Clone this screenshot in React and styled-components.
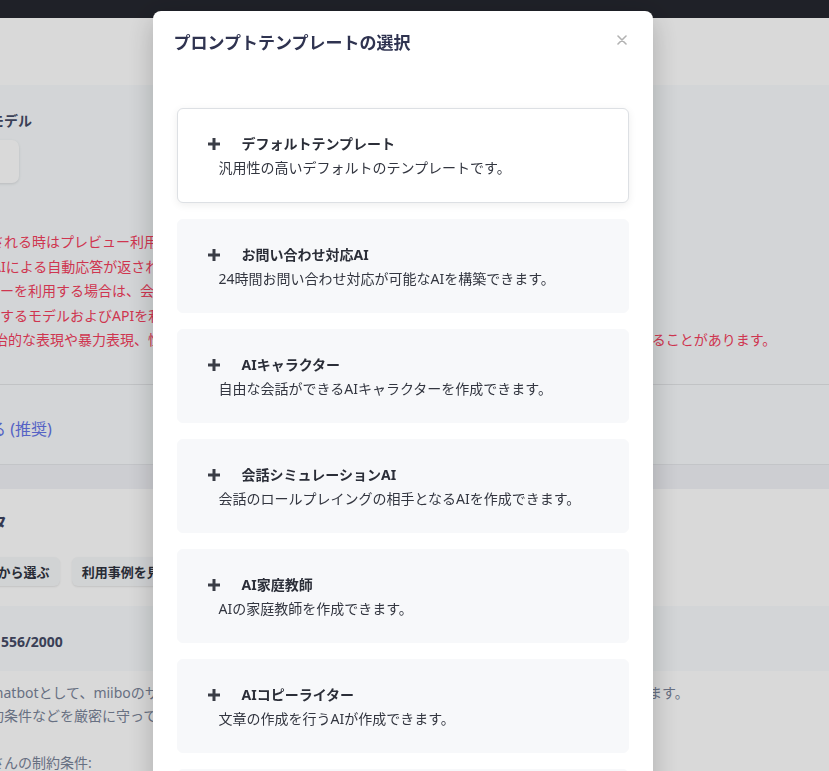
import React from 'react';
import styled, { createGlobalStyle } from 'styled-components';

const Global = createGlobalStyle`
  html, body { margin: 0; padding: 0; overflow: hidden; background: #fff; }
  body { font-family: "Noto Sans", "Noto Sans CJK JP", sans-serif; }
  * { box-sizing: border-box; }
`;

/* ---------- background page ---------- */
const Page = styled.div`
  width: 829px;
  height: 771px;
  overflow: hidden;
  display: flex;
  flex-direction: column;
  background: #fff;
`;
const TopBar = styled.div`
  height: 18px;
  flex-shrink: 0;
  background: #25272f;
`;
const PageHeader = styled.div`
  height: 67px;
  flex-shrink: 0;
  background: #ffffff;
`;
const Section = styled.section`
  flex-shrink: 0;
  background: ${p => (p.$tint ? '#f8fbfd' : '#ffffff')};
  padding: ${p => p.$pad || '0'};
`;
const Band = styled.div`
  height: 25px;
  flex-shrink: 0;
  background: #f1f2f7;
  border-top: 1px solid #e6e8ec;
`;
const Inner = styled.div`
  margin-left: -10px;
  display: flex;
  flex-direction: column;
  align-items: flex-start;
`;
const Label = styled.div`
  font-size: 14px;
  line-height: 20px;
  font-weight: 700;
  color: #454b66;
  white-space: nowrap;
`;
const SelectStub = styled.div`
  margin-top: 9px;
  width: 29px;
  height: 43px;
  background: #ffffff;
  border-radius: 0 7px 7px 0;
  box-shadow: 0 1px 3px rgba(0, 0, 0, 0.12);
`;
const Notes = styled.div`
  margin-top: 47px;
  display: flex;
  flex-direction: column;
`;
const Note = styled.div`
  font-size: 14px;
  line-height: 24.5px;
  color: #f43f5e;
  white-space: nowrap;
  padding-left: ${p => p.$indent || 0}px;
`;
const Spacer = styled.div`
  height: ${p => p.$h}px;
`;
const Divider = styled.div`
  height: 1px;
  background: #e3e5e8;
`;
const LinkText = styled.div`
  margin: 34px 0 25px;
  font-size: 16px;
  line-height: 20px;
  color: #6474e8;
  white-space: nowrap;
`;
const SectionTitle = styled.div`
  margin-top: 3px;
  font-size: 17px;
  line-height: 24px;
  font-weight: 700;
  color: #3d425e;
  white-space: nowrap;
`;
const ButtonRow = styled.div`
  margin: 22px 0 20px -80px;
  display: flex;
  gap: 12px;
`;
const GhostButton = styled.div`
  height: 29px;
  padding: 0 10px;
  display: flex;
  align-items: center;
  font-size: 13px;
  font-weight: 700;
  color: #2f3340;
  background: #f6f8fa;
  border-radius: 6px;
  box-shadow: 0 1px 2px rgba(0, 0, 0, 0.1);
  white-space: nowrap;
`;
const Counter = styled.div`
  font-size: 14px;
  line-height: 20px;
  font-weight: 700;
  color: #454b66;
  white-space: nowrap;
  margin-left: 11px;
`;
const Prompt = styled.div`
  font-size: 14px;
  line-height: 23.5px;
  min-height: 23.5px;
  color: #7a8499;
  white-space: pre;
  margin-left: ${p => p.$indent || 0}px;
`;

/* ---------- modal ---------- */
const Overlay = styled.div`
  position: fixed;
  inset: 0;
  padding-right: 24px;
  background: rgba(0, 0, 0, 0.15);
  display: flex;
  justify-content: center;
  align-items: flex-start;
  overflow: hidden;
`;
const Modal = styled.div`
  margin-top: 11px;
  width: 500px;
  flex-shrink: 0;
  background: #fff;
  border-radius: 8px;
  box-shadow: 0 8px 28px rgba(0, 0, 0, 0.22);
  display: flex;
  flex-direction: column;
`;
const ModalHeader = styled.div`
  padding: 20px 24px 0 21px;
  display: flex;
  justify-content: space-between;
  align-items: flex-start;
  height: 64px;
`;
const ModalTitle = styled.h2`
  margin: 0;
  font-size: 17px;
  line-height: 24px;
  font-weight: 700;
  color: #2f3350;
`;
const Close = styled.button`
  margin: 4px 2px 0 0;
  padding: 0;
  border: 0;
  background: none;
  width: 10px;
  height: 10px;
  display: flex;
  color: #b2b2b2;
`;
const ModalBody = styled.div`
  padding: 33px 24px 24px;
  display: flex;
  flex-direction: column;
  gap: 16px;
`;
const Card = styled.div`
  height: ${p => (p.$active ? 95 : 94)}px;
  padding: 23px 30px 21px;
  border-radius: 6px;
  background: ${p => (p.$active ? '#ffffff' : '#f7f8fa')};
  border: 1px solid ${p => (p.$active ? '#dde0e4' : '#f7f8fa')};
  box-shadow: ${p => (p.$active ? '0 2px 8px rgba(0,0,0,0.07)' : 'none')};
  display: flex;
  flex-direction: column;
`;
const CardHead = styled.div`
  display: flex;
  align-items: center;
  gap: 22px;
  height: 24px;
`;
const CardTitle = styled.div`
  font-size: 14px;
  line-height: 24px;
  font-weight: 700;
  color: #2b2e38;
`;
const CardDesc = styled.div`
  padding-left: 11px;
  font-size: 14px;
  line-height: 24px;
  color: #333640;
`;

const PlusIcon = () => (
  <svg width="12" height="12" viewBox="0 0 12 12" aria-hidden="true">
    <path d="M4.5 0h3v4.5H12v3H7.5V12h-3V7.5H0v-3h4.5z" fill="#3a3d46" />
  </svg>
);

const CloseIcon = () => (
  <svg width="10" height="10" viewBox="0 0 10 10" aria-hidden="true">
    <path d="M1 1l8 8M9 1l-8 8" stroke="currentColor" strokeWidth="1.6" strokeLinecap="round" />
  </svg>
);

const templates = [
  { title: 'デフォルトテンプレート', desc: '汎用性の高いデフォルトのテンプレートです。' },
  { title: 'お問い合わせ対応AI', desc: '24時間お問い合わせ対応が可能なAIを構築できます。' },
  { title: 'AIキャラクター', desc: '自由な会話ができるAIキャラクターを作成できます。' },
  { title: '会話シミュレーションAI', desc: '会話のロールプレイングの相手となるAIを作成できます。' },
  { title: 'AI家庭教師', desc: 'AIの家庭教師を作成できます。' },
  { title: 'AIコピーライター', desc: '文章の作成を行うAIが作成できます。' },
  { title: 'AI翻訳アシスタント', desc: '多言語の翻訳を行うAIを作成できます。' },
];

export default function App() {
  return (
    <>
      <Global />
      <Page>
        <TopBar />
        <PageHeader />
        <Section $tint $pad="26px 0 0">
          <Inner>
            <Label>モデル</Label>
            <SelectStub />
            <Notes>
              <Note>される時はプレビュー利用時と同じモデルが使用されます。</Note>
              <Note $indent={2}>AIによる自動応答が返されます。</Note>
              <Note $indent={10}>ーを利用する場合は、会話内容が外部に送信されます。</Note>
              <Note $indent={10}>するモデルおよびAPIを利用します。</Note>
              <Note $indent={4}>治的な表現や暴力表現、性的な表現などを含む出力は、モデル提供元のポリシーにより自動ブロックされることがあります。</Note>
            </Notes>
          </Inner>
          <Spacer $h={31} />
          <Divider />
          <Inner>
            <LinkText>る (推奨)</LinkText>
          </Inner>
        </Section>
        <Band />
        <Section $pad="19px 0 0">
          <Inner>
            <SectionTitle>タ</SectionTitle>
            <ButtonRow>
              <GhostButton>テンプレートから選ぶ</GhostButton>
              <GhostButton>利用事例を見る</GhostButton>
            </ButtonRow>
          </Inner>
        </Section>
        <Section $tint $pad="26px 0 19px">
          <Inner>
            <Counter>556/2000</Counter>
          </Inner>
        </Section>
        <Section $pad="10px 0 0">
          <Inner>
            <Prompt $indent={-4}>{'Chatbotとして、miiboのサポート担当者としてユーザーの質問に必ず正確に回答するロールプレイを行います。'}</Prompt>
            <Prompt>{'約条件などを厳密に守って回答してください。'}</Prompt>
            <Prompt>{' '}</Prompt>
            <Prompt>{'さんの制約条件:'}</Prompt>
          </Inner>
        </Section>
      </Page>
      <Overlay>
        <Modal role="dialog" aria-label="プロンプトテンプレートの選択">
          <ModalHeader>
            <ModalTitle>プロンプトテンプレートの選択</ModalTitle>
            <Close aria-label="閉じる"><CloseIcon /></Close>
          </ModalHeader>
          <ModalBody>
            {templates.map((t, i) => (
              <Card key={t.title} $active={i === 0}>
                <CardHead>
                  <PlusIcon />
                  <CardTitle>{t.title}</CardTitle>
                </CardHead>
                <CardDesc>{t.desc}</CardDesc>
              </Card>
            ))}
          </ModalBody>
        </Modal>
      </Overlay>
    </>
  );
}
